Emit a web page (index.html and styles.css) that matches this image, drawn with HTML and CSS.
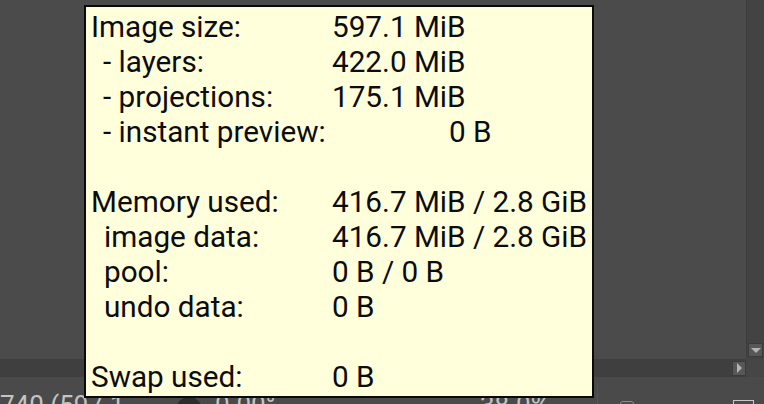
FILE: index.html
```html
<!DOCTYPE html>
<html>
<head>
<meta charset="utf-8">
<link rel="stylesheet" href="styles.css">
</head>
<body>
<div class="app">
  <div class="canvas"></div>
  <div class="vscroll">
    <div class="vbtn"><span class="tri-down"></span></div>
  </div>
  <div class="hscroll">
    <div class="hbtn"><span class="tri-right"></span></div>
  </div>
  <div class="corner"></div>
  <div class="status">
    <span class="st st-size">740 (597.1</span>
    <span class="dial"></span>
    <span class="st st-angle">0.00°</span>
    <span class="st st-zoom">38.0%</span>
    <span class="sep"></span>
    <span class="small-knob"></span>
    <span class="small-box"></span>
  </div>
</div>
<div class="tooltip">
  <div class="grid">
    <div class="lbl">Image size:</div><div class="val">597.1 MiB</div>
    <div class="lbl ind">- layers:</div><div class="val">422.0 MiB</div>
    <div class="lbl ind">- projections:</div><div class="val">175.1 MiB</div>
    <div class="lbl ind">- instant preview:</div><div class="val far">0 B</div>
    <div class="blank"></div>
    <div class="lbl">Memory used:</div><div class="val">416.7 MiB / 2.8 GiB</div>
    <div class="lbl ind2">image data:</div><div class="val">416.7 MiB / 2.8 GiB</div>
    <div class="lbl ind2">pool:</div><div class="val">0 B / 0 B</div>
    <div class="lbl ind2">undo data:</div><div class="val">0 B</div>
    <div class="blank"></div>
    <div class="lbl">Swap used:</div><div class="val">0 B</div>
  </div>
</div>
</body>
</html>
```
FILE: styles.css
```css
html, body {
  margin: 0;
  padding: 0;
  width: 764px;
  height: 404px;
  overflow: hidden;
  background: #4a4a4a;
  font-family: Roboto, "Noto Sans", sans-serif;
}

.app {
  display: grid;
  grid-template-columns: 746px 18px;
  grid-template-rows: 359px 18px 27px;
  width: 764px;
  height: 404px;
}

.canvas {
  background: #4b4b4b;
}

.vscroll {
  background: #434343;
  border-left: 1px solid #3c3c3c;
  display: flex;
  flex-direction: column;
  justify-content: flex-end;
  align-items: center;
  padding-bottom: 2px;
}

.vbtn {
  width: 15px;
  height: 14px;
  background: #575757;
  border: 1px solid #3a3a3a;
  display: flex;
  align-items: center;
  justify-content: center;
  box-sizing: border-box;
}

.tri-down {
  width: 0;
  height: 0;
  border-left: 5px solid transparent;
  border-right: 5px solid transparent;
  border-top: 5px solid #b4b4b4;
}

.hscroll {
  background: #3f3f3f;
  display: flex;
  justify-content: flex-end;
  align-items: center;
}

.hbtn {
  width: 14px;
  height: 15px;
  background: #575757;
  border: 1px solid #3a3a3a;
  display: flex;
  align-items: center;
  justify-content: center;
  box-sizing: border-box;
}

.tri-right {
  width: 0;
  height: 0;
  border-top: 5px solid transparent;
  border-bottom: 5px solid transparent;
  border-left: 5px solid #b4b4b4;
}

.corner {
  background: #464646;
}

.status {
  grid-column: 1 / 3;
  background: #4a4a4a;
  position: relative;
  overflow: hidden;
}

.st {
  position: absolute;
  top: 13px;
  font-size: 26px;
  line-height: 30px;
  color: #c4c4c4;
  white-space: nowrap;
}

.st-size { left: 0; }
.st-angle { left: 215px; }
.st-zoom { left: 480px; }

.dial {
  position: absolute;
  left: 176px;
  top: 20px;
  width: 26px;
  height: 26px;
  border-radius: 50%;
  background: #2c2c2c;
}

.sep {
  position: absolute;
  left: 597px;
  top: 6px;
  width: 1px;
  height: 21px;
  background: #555;
}

.small-knob {
  position: absolute;
  left: 620px;
  top: 24px;
  width: 12px;
  height: 12px;
  border-radius: 3px;
  border: 1px solid #8a8a8a;
}

.small-box {
  position: absolute;
  left: 733px;
  top: 23px;
  width: 19px;
  height: 12px;
  border: 1px solid #c8c8c8;
}

.tooltip {
  position: absolute;
  left: 84px;
  top: 5px;
  width: 510px;
  height: 393px;
  box-sizing: border-box;
  border: 2px solid #0a0a0a;
  background: #ffffdc;
  padding: 2px 0 0 5px;
  color: #0c0c0c;
  font-size: 29.7px;
  line-height: 35px;
}

.grid {
  display: grid;
  grid-template-columns: 241px auto;
  grid-auto-rows: 35px;
  white-space: nowrap;
}

.ind { padding-left: 12px; }
.ind2 { padding-left: 13px; }

.far { padding-left: 117px; }

.blank {
  grid-column: 1 / 3;
}
```
